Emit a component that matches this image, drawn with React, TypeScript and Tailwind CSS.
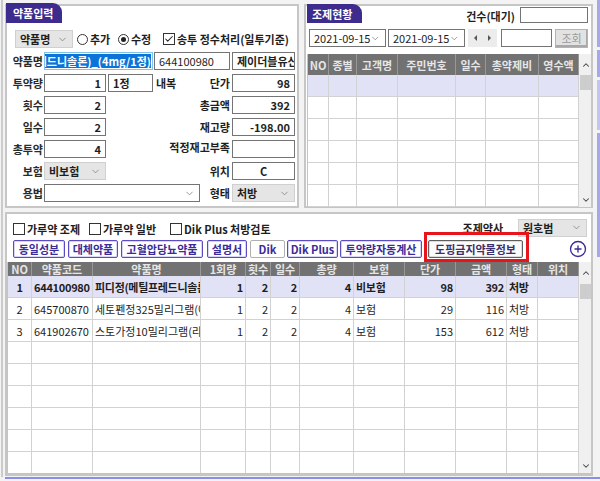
import { ChevronDown, ChevronUp, CirclePlus, Check } from "lucide-react"

type Col = { w: string; label: string; align: string }

const topCols: Col[] = [
  { w: "w-[21px]", label: "NO", align: "justify-center" },
  { w: "w-[28px]", label: "종별", align: "justify-center" },
  { w: "w-[41px]", label: "고객명", align: "justify-center" },
  { w: "w-[58px]", label: "주민번호", align: "justify-center" },
  { w: "w-[30px]", label: "일수", align: "justify-end" },
  { w: "w-[53px]", label: "총약제비", align: "justify-end" },
  { w: "w-[40px]", label: "영수액", align: "justify-end" },
]

const bottomCols: Col[] = [
  { w: "w-[24px]", label: "NO", align: "justify-center" },
  { w: "w-[61px]", label: "약품코드", align: "justify-start" },
  { w: "w-[108px]", label: "약품명", align: "justify-start" },
  { w: "w-[45px]", label: "1회량", align: "justify-end" },
  { w: "w-[25px]", label: "횟수", align: "justify-end" },
  { w: "w-[29px]", label: "일수", align: "justify-end" },
  { w: "w-[54px]", label: "총량", align: "justify-end" },
  { w: "w-[51px]", label: "보험", align: "justify-start" },
  { w: "w-[51px]", label: "단가", align: "justify-end" },
  { w: "w-[51px]", label: "금액", align: "justify-end" },
  { w: "w-[31px]", label: "형태", align: "justify-start" },
  { w: "w-[41px]", label: "위치", align: "justify-start" },
]

const drugs = [
  ["1", "644100980", "피디정(메틸프레드니솔론)_(4mg/1정)", "1", "2", "2", "4", "비보험", "98", "392", "처방", ""],
  ["2", "645700870", "세토펜정325밀리그램(아세트아미노펜)", "1", "2", "2", "4", "보험", "29", "116", "처방", ""],
  ["3", "641902670", "스토가정10밀리그램(라푸티딘)", "1", "2", "2", "4", "보험", "153", "612", "처방", ""],
]

function Grid({ cols, rows, rowCount, height, headerH }: { cols: Col[]; rows: string[][]; rowCount: number; height: string; headerH: string }) {
  const all = [...rows]
  while (all.length < rowCount) all.push(cols.map(() => ""))
  return (
    <div className={`flex border-l border-b border-[#c4c4c4] overflow-hidden ${height}`}>
      <div className="flex flex-col">
        <div className={`flex bg-[#727272] ${headerH}`}>
          {cols.map((c) => (
            <div key={c.label} className={`${c.w} shrink-0 border-r border-[#989898] flex items-center justify-center font-bold text-[#e6e6e6] whitespace-nowrap overflow-hidden`}>
              {c.label}
            </div>
          ))}
        </div>
        {all.map((r, i) => (
          <div key={i} className={`flex h-[22px] shrink-0 border-b border-[#d2d2d2] ${i === 0 ? "bg-[#e2e2f7] font-bold tracking-[-0.3px]" : "bg-white"}`}>
            {cols.map((c, j) => (
              <div key={j} className={`${c.w} shrink-0 border-r border-[#d2d2d2] px-[2px] flex items-center overflow-hidden whitespace-nowrap ${c.align}`}>
                {r[j]}
              </div>
            ))}
          </div>
        ))}
      </div>
      <div className="w-[13px] shrink-0 bg-[#f0f0f0] flex flex-col items-center">
        <div className={`${headerH} flex items-center`}>
          <ChevronUp size={10} strokeWidth={2.5} color="#444" />
        </div>
        <div className="w-[11px] h-[15px] bg-[#cdcdcd]" />
        <div className="flex-1" />
        <div className="h-[14px] flex items-center">
          <ChevronDown size={10} strokeWidth={2.5} color="#444" />
        </div>
      </div>
    </div>
  )
}

function Box({ w, v, align = "justify-end", bold = false }: { w: string; v: string; align?: string; bold?: boolean }) {
  return (
    <div className={`${w} h-[18px] shrink-0 border border-[#747474] bg-white px-[4px] flex items-center whitespace-nowrap overflow-hidden ${align} ${bold ? "font-bold" : ""}`}>
      {v}
    </div>
  )
}

function Sel({ w, v, gray = false }: { w: string; v: string; gray?: boolean }) {
  return (
    <div className={`${w} h-[18px] shrink-0 border flex items-center pl-[4px] pr-[4px] ${gray ? "bg-[#e5e5e5] border-[#d0d0d0] font-bold" : "bg-white border-[#747474]"}`}>
      <span className="flex-1 whitespace-nowrap">{v}</span>
      <ChevronDown size={11} strokeWidth={1.5} color="#707070" />
    </div>
  )
}

function Label({ children, w = "w-[36px]" }: { children: string; w?: string }) {
  return <span className={`${w} shrink-0 text-right font-bold text-[#2a2a2a] whitespace-nowrap`}>{children}</span>
}

function CheckBox({ checked = false }: { checked?: boolean }) {
  return (
    <span className="w-[12px] h-[12px] shrink-0 border border-[#333] bg-white flex items-center justify-center">
      {checked && <Check size={10} strokeWidth={2.5} color="#222" />}
    </span>
  )
}

function LeftPanel() {
  return (
    <div className="w-[294px] h-[204px] border-2 border-[#c6c6c6] bg-white flex flex-col">
      <div className="-mt-[3px] -ml-[1px] w-[56px] h-[20px] bg-[#3d2c8d] rounded-tr-[9px] text-white font-bold flex items-center pl-[7px]">
        약품입력
      </div>
      <div className="mt-[5px] flex flex-col">
        <div className="h-[22px] flex items-center pl-[8px]">
          <Sel w="w-[58px]" v="약품명" gray />
          <div className="w-[41px] ml-[4px] flex items-center gap-[2px] font-bold">
            <span className="w-[11px] h-[11px] rounded-full border border-[#333]" />
            추가
          </div>
          <div className="w-[45px] flex items-center gap-[2px] font-bold">
            <span className="w-[11px] h-[11px] rounded-full border border-[#333] flex items-center justify-center">
              <span className="w-[5px] h-[5px] rounded-full bg-[#222]" />
            </span>
            수정
          </div>
          <div className="flex items-center gap-[2px] font-bold whitespace-nowrap">
            <CheckBox checked />
            송투 정수처리(일투기준)
          </div>
        </div>
        <div className="h-[22px] flex items-center">
          <Label>약품명</Label>
          <div className="ml-[1px] w-[109px] h-[18px] shrink-0 border border-[#7fc4e8] bg-white pl-[3px] pr-[1px] flex items-center justify-end overflow-hidden">
            <span className="shrink-0 whitespace-nowrap bg-[#0a74d8] text-white leading-[14px] font-bold">피디정(메틸프레드니솔론)_(4mg/1정)</span>
          </div>
          <div className="ml-[1px]">
            <Box w="w-[76px]" v="644100980" align="justify-start" />
          </div>
          <div className="ml-[2px]">
            <Box w="w-[63px]" v="제이더블유신약" align="justify-start" bold />
          </div>
        </div>
        <div className="h-[22px] flex items-center">
          <Label>투약량</Label>
          <div className="ml-[1px]"><Box w="w-[62px]" v="1" bold /></div>
          <div className="ml-[2px]"><Box w="w-[45px]" v="1정" align="justify-start" bold /></div>
          <span className="ml-[3px] font-bold">내복</span>
          <span className="flex-1 text-right font-bold">단가</span>
          <div className="ml-[2px] mr-[2px]"><Box w="w-[63px]" v="98" bold /></div>
        </div>
        {[
          ["횟수", "2", "총금액", "392"],
          ["일수", "2", "재고량", "-198.00"],
          ["총투약", "4", "적정재고부족", ""],
        ].map(([a, b, c, d]) => (
          <div key={a} className="h-[22px] flex items-center">
            <Label>{a}</Label>
            <div className="ml-[1px]"><Box w="w-[62px]" v={b} bold /></div>
            <span className={`flex-1 text-right font-bold ${c === "적정재고부족" ? "-mt-[4px]" : ""}`}>{c}</span>
            <div className="ml-[2px] mr-[2px]"><Box w="w-[63px]" v={d} bold /></div>
          </div>
        ))}
        <div className="h-[22px] flex items-center">
          <Label>보험</Label>
          <div className="ml-[1px]"><Sel w="w-[62px]" v="비보험" gray /></div>
          <span className="flex-1 text-right font-bold">위치</span>
          <div className="ml-[2px] mr-[2px]"><Box w="w-[63px]" v="C" align="justify-center" bold /></div>
        </div>
        <div className="h-[22px] flex items-center">
          <Label>용법</Label>
          <div className="ml-[1px]"><Sel w="w-[156px]" v="" /></div>
          <span className="flex-1 text-right font-bold">형태</span>
          <div className="ml-[2px] mr-[2px]"><Sel w="w-[63px]" v="처방" gray /></div>
        </div>
      </div>
    </div>
  )
}

function RightPanel() {
  return (
    <div className="w-[289px] h-[204px] border-2 border-[#c6c6c6] bg-white flex flex-col">
      <div className="flex items-start h-[19px] -mt-[2px]">
        <div className="ml-[1px] w-[55px] h-[19px] bg-[#3d2c8d] rounded-tr-[9px] text-white font-bold flex items-center pl-[5px]">
          조제현황
        </div>
        <span className="flex-1 text-right font-bold mt-[5px]">건수(대기)</span>
        <div className="ml-[5px] mr-[3px] mt-[3px] w-[68px] h-[16px] border border-[#747474] bg-white" />
      </div>
      <div className="mt-[6px] h-[18px] flex items-center pl-[3px]">
        <Sel w="w-[77px]" v="2021-09-15" />
        <div className="ml-[2px]"><Sel w="w-[77px]" v="2021-09-15" /></div>
        <div className="ml-[3px] w-[29px] h-[18px] flex bg-[#ececec]">
          <div className="flex-1 flex items-center justify-center">
            <span className="w-0 h-0 border-y-[3px] border-y-transparent border-r-[3px] border-r-[#555]" />
          </div>
          <div className="flex-1 flex items-center justify-center">
            <span className="w-0 h-0 border-y-[3px] border-y-transparent border-l-[3px] border-l-[#555]" />
          </div>
        </div>
        <div className="ml-[4px] w-[51px] h-[18px] border border-[#747474] bg-white" />
        <div className="ml-[3px] w-[33px] h-[19px] border border-[#b4b4b4] bg-[#e2e2e2] shadow-[inset_-1px_-2px_0_#a8a8a8] flex items-center justify-center text-[#9a9a9a]">
          조회
        </div>
      </div>
      <div className="mt-[7px] ml-[1px]">
        <Grid cols={topCols} rows={[["", "", "", "", "", "", ""]]} rowCount={6} height="h-[154px]" headerH="h-[21px]" />
      </div>
    </div>
  )
}

const buttons = [
  { t: "동일성분", w: "w-[52px]", ml: "" },
  { t: "대체약품", w: "w-[50px]", ml: "ml-[3px]" },
  { t: "고혈압당뇨약품", w: "w-[82px]", ml: "ml-[3px]" },
  { t: "설명서", w: "w-[40px]", ml: "ml-[4px]" },
  { t: "Dik", w: "w-[35px]", ml: "ml-[3px]", plain: true },
  { t: "Dik Plus", w: "w-[51px]", ml: "ml-[2px]" },
  { t: "투약량자동계산", w: "w-[82px]", ml: "ml-[2px]" },
]

function BottomPanel() {
  return (
    <div className="mt-[4px] w-[588px] h-[264px] border-2 border-[#c6c6c6] bg-white flex flex-col">
      <div className="mt-[5px] h-[20px] flex items-center pl-[6px]">
        <div className="w-[76px] flex items-center gap-[2px] font-bold">
          <CheckBox />
          가루약 조제
        </div>
        <div className="w-[81px] flex items-center gap-[2px] font-bold">
          <CheckBox />
          가루약 일반
        </div>
        <div className="flex items-center gap-[2px] font-bold whitespace-nowrap">
          <CheckBox />
          Dik Plus 처방검토
        </div>
        <span className="flex-1 text-right font-bold -mt-[2px]">조제약사</span>
        <div className="ml-[15px] mr-[4px] -mt-[3px]"><Sel w="w-[69px]" v="원호범" gray /></div>
      </div>
      <div className="mt-[1px] h-[18px] flex items-center pl-[6px]">
        {buttons.map((b) => (
          <div
            key={b.t}
            className={`${b.w} ${b.ml} h-[18px] shrink-0 rounded-[2px] border bg-white flex items-center justify-center font-bold text-[#3a2c99] whitespace-nowrap ${b.plain ? "border-[#b0b0b0]" : "border-[#5b4cc6] shadow-[inset_0_0_0_1px_#d9d5f5]"}`}
          >
            {b.t}
          </div>
        ))}
        <div className="relative ml-[6px]">
          <div className="w-[95px] h-[18px] rounded-[2px] border border-[#5e5e5e] bg-[#fbfbfb] shadow-[inset_0_0_0_1px_#dcdcdc] flex items-center justify-center font-bold text-[#3b2f6e] whitespace-nowrap">
            도핑금지약물정보
          </div>
          <span className="absolute -left-[4px] -right-[6px] -top-[8px] -bottom-[4px] border-[3px] border-[#e8141c]" />
        </div>
        <div className="flex-1" />
        <div className="mr-[4px]">
          <CirclePlus size={18} strokeWidth={1.8} color="#3a2c99" />
        </div>
      </div>
      <div className="mt-[4px]">
        <Grid cols={bottomCols} rows={drugs} rowCount={9} height="h-[212px]" headerH="h-[22px]" />
      </div>
    </div>
  )
}

export default function App() {
  return (
    <div className="w-[600px] h-[481px] bg-[#f3f3f3] flex flex-col overflow-hidden font-['Noto_Sans_CJK_KR',sans-serif] text-[11px] leading-[14px] text-[#1e1e1e]">
      <div className="h-[477px] flex">
        <div className="w-[5px] shrink-0 flex">
          <div className="ml-[1px] w-[2px] bg-[#cbcbcb]" />
        </div>
        <div className="w-[591px] shrink-0 flex flex-col pt-[4px]">
          <div className="flex gap-[5px] h-[204px]">
            <LeftPanel />
            <RightPanel />
          </div>
          <BottomPanel />
        </div>
        <div className="w-[4px] shrink-0 flex flex-col">
          <div className="h-[47px] ml-[1px] w-[3px] bg-[#a7a7ec]" />
          <div className="h-[3px]" />
          <div className="h-[27px] ml-[1px] w-[3px] bg-[#a7a7ec]" />
          <div className="h-[3px]" />
          <div className="h-[50px] ml-[1px] w-[3px] bg-[#c4c4f2]" />
          <div className="h-[3px]" />
          <div className="h-[124px] ml-[1px] w-[3px] bg-[#a7a7ec]" />
        </div>
      </div>
      <div className="ml-[5px] h-[2px] bg-[#8d8de6]" />
    </div>
  )
}
